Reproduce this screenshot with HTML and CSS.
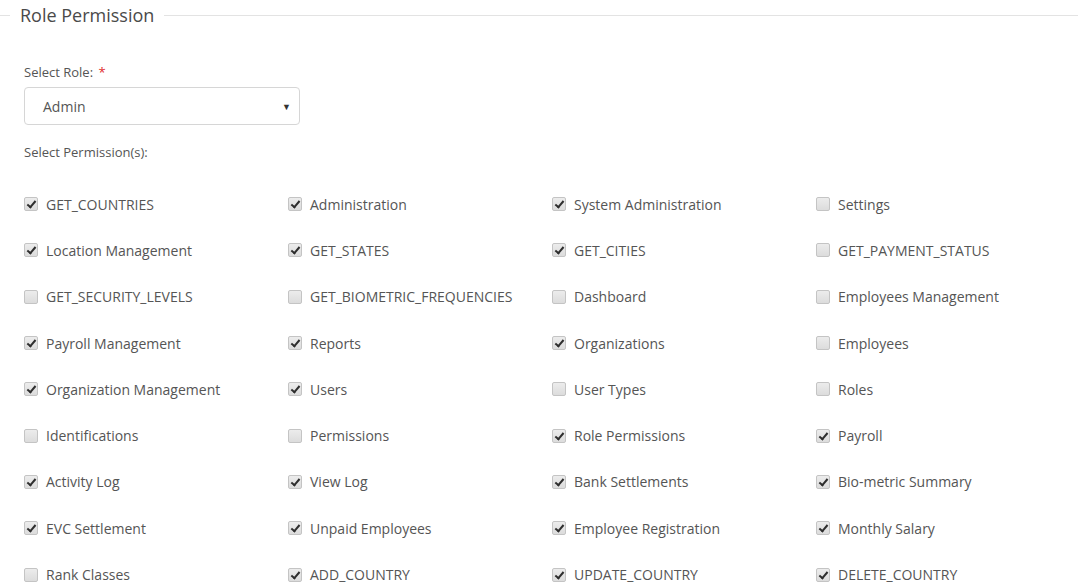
FILE: index.html
```html
<!DOCTYPE html>
<html>
<head>
<meta charset="utf-8">
<link rel="stylesheet" href="styles.css">
</head>
<body>
<fieldset class="panel">
  <legend class="panel-title">Role Permission</legend>
  <div class="panel-body">
    <div class="field">
      <label class="field-label">Select Role: <span class="req">*</span></label>
      <div class="select">
        <span class="select-value">Admin</span>
        <span class="select-arrow">&#9660;</span>
      </div>
    </div>
    <div class="field-label perm-label">Select Permission(s):</div>
    <div class="perm-grid">
      <label class="perm"><span class="cb on"></span>GET_COUNTRIES</label>
      <label class="perm"><span class="cb on"></span>Administration</label>
      <label class="perm"><span class="cb on"></span>System Administration</label>
      <label class="perm"><span class="cb"></span>Settings</label>

      <label class="perm"><span class="cb on"></span>Location Management</label>
      <label class="perm"><span class="cb on"></span>GET_STATES</label>
      <label class="perm"><span class="cb on"></span>GET_CITIES</label>
      <label class="perm"><span class="cb"></span>GET_PAYMENT_STATUS</label>

      <label class="perm"><span class="cb"></span>GET_SECURITY_LEVELS</label>
      <label class="perm"><span class="cb"></span>GET_BIOMETRIC_FREQUENCIES</label>
      <label class="perm"><span class="cb"></span>Dashboard</label>
      <label class="perm"><span class="cb"></span>Employees Management</label>

      <label class="perm"><span class="cb on"></span>Payroll Management</label>
      <label class="perm"><span class="cb on"></span>Reports</label>
      <label class="perm"><span class="cb on"></span>Organizations</label>
      <label class="perm"><span class="cb"></span>Employees</label>

      <label class="perm"><span class="cb on"></span>Organization Management</label>
      <label class="perm"><span class="cb on"></span>Users</label>
      <label class="perm"><span class="cb"></span>User Types</label>
      <label class="perm"><span class="cb"></span>Roles</label>

      <label class="perm"><span class="cb"></span>Identifications</label>
      <label class="perm"><span class="cb"></span>Permissions</label>
      <label class="perm"><span class="cb on"></span>Role Permissions</label>
      <label class="perm"><span class="cb on"></span>Payroll</label>

      <label class="perm"><span class="cb on"></span>Activity Log</label>
      <label class="perm"><span class="cb on"></span>View Log</label>
      <label class="perm"><span class="cb on"></span>Bank Settlements</label>
      <label class="perm"><span class="cb on"></span>Bio-metric Summary</label>

      <label class="perm"><span class="cb on"></span>EVC Settlement</label>
      <label class="perm"><span class="cb on"></span>Unpaid Employees</label>
      <label class="perm"><span class="cb on"></span>Employee Registration</label>
      <label class="perm"><span class="cb on"></span>Monthly Salary</label>

      <label class="perm"><span class="cb"></span>Rank Classes</label>
      <label class="perm"><span class="cb on"></span>ADD_COUNTRY</label>
      <label class="perm"><span class="cb on"></span>UPDATE_COUNTRY</label>
      <label class="perm"><span class="cb on"></span>DELETE_COUNTRY</label>
    </div>
  </div>
</fieldset>
</body>
</html>
```

FILE: styles.css
```css
html, body {
  margin: 0;
  padding: 0;
  background: #fff;
  overflow: hidden;
}
body {
  font-family: "Open Sans", "Liberation Sans", sans-serif;
  color: #555;
  width: 1078px;
  height: 587px;
}
.panel {
  margin: 0;
  width: 1076px;
  box-sizing: border-box;
  border: 1px solid #e3e3e3;
  border-right-width: 2px;
  border-left: none;
  border-radius: 0 3px 0 0;
  padding: 0;
  min-height: 700px;
}
.panel-title {
  margin-left: 10px;
  padding: 0 10px;
  font-size: 18px;
  line-height: 31px;
  color: #4a4a4a;
}
.panel-body {
  padding-left: 24px;
}
.field {
  padding-top: 31px;
}
.field-label {
  display: block;
  font-size: 13px;
  line-height: 20px;
  color: #555;
}
.req {
  color: #e02b2b;
  margin-left: 2px;
}
.select {
  margin-top: 5px;
  width: 276px;
  height: 38px;
  box-sizing: border-box;
  border: 1px solid #d6d6d6;
  border-radius: 4px;
  display: flex;
  align-items: center;
  justify-content: space-between;
  padding: 0 8px 0 18px;
  font-size: 14px;
  color: #555;
}
.select-arrow {
  font-size: 9px;
  color: #333;
}
.perm-label {
  margin-top: 17px;
}
.perm-grid {
  margin-top: 19px;
  display: grid;
  grid-template-columns: repeat(4, 264px);
  grid-auto-rows: 46.3px;
}
.perm {
  display: flex;
  align-items: center;
  font-size: 14px;
  color: #555;
  white-space: nowrap;
}
.cb {
  width: 12px;
  height: 12px;
  border: 1px solid #c4c4c4;
  border-radius: 2px;
  background: linear-gradient(#ececec, #dcdcdc);
  margin-right: 8px;
  flex: none;
  position: relative;
}
.cb.on::after {
  content: "";
  position: absolute;
  left: 4px;
  top: 1px;
  width: 3px;
  height: 7px;
  border: solid #2e2e2e;
  border-width: 0 2.5px 2.5px 0;
  transform: rotate(40deg);
}
```
